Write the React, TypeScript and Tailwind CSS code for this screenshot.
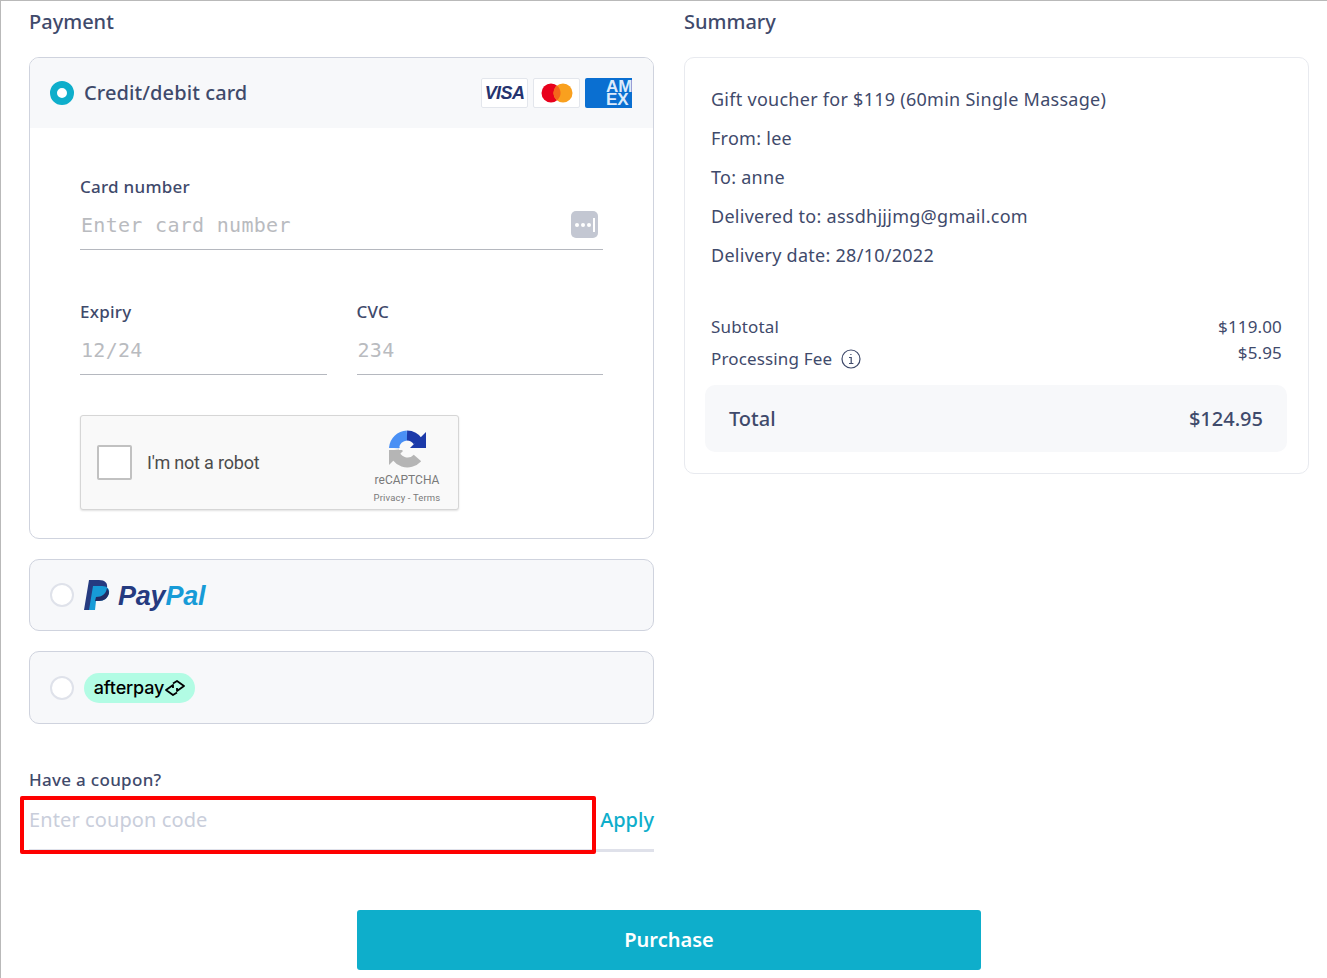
const font = "[font-family:'Noto_Sans',sans-serif]";

function Radio({ active }: { active?: boolean }) {
  return active ? (
    <span className="block w-6 h-6 rounded-full border-[7px] border-[#0eaecb] bg-white shrink-0" />
  ) : (
    <span className="block w-6 h-6 rounded-full border-2 border-[#dfe2ea] bg-white shrink-0" />
  );
}

function CardLogos() {
  return (
    <div className="flex gap-[5px] mt-[-1px]">
      <div className="w-[47px] h-[30px] bg-white border border-[#e3e6ec] rounded-[2px] flex items-center justify-center">
        <span className="text-[#25346f] text-[18px] font-bold italic leading-none tracking-[-0.6px] [font-family:'Liberation_Sans',sans-serif]">VISA</span>
      </div>
      <div className="w-[47px] h-[30px] bg-white border border-[#e3e6ec] rounded-[2px] flex items-center justify-center">
        <svg width="32" height="20" viewBox="0 0 32 20">
          <circle cx="10" cy="10" r="9.5" fill="#e8001c" />
          <circle cx="22" cy="10" r="9.5" fill="#f9a01e" />
          <path d="M16 2.6a9.5 9.5 0 0 1 0 14.8a9.5 9.5 0 0 1 0-14.8z" fill="#f4661b" />
        </svg>
      </div>
      <svg width="47" height="30" viewBox="0 0 47 30" className="block rounded-l-[2px]">
        <rect width="47" height="30" fill="#0a6fd1" />
        <text x="21" y="14" fill="#dcebfb" fontSize="17" fontWeight="700" fontFamily="'Liberation Sans', sans-serif">AM</text>
        <text x="21" y="27" fill="#dcebfb" fontSize="17" fontWeight="700" fontFamily="'Liberation Sans', sans-serif">EX</text>
      </svg>
    </div>
  );
}

function Field({ label, placeholder, icon, className }: { label: string; placeholder: string; icon?: boolean; className?: string }) {
  return (
    <div className={className}>
      <div className="text-[17px] leading-[22px] font-medium tracking-[0.25px] text-[#3f4a6b]">{label}</div>
      <div className="mt-[5px] h-[47px] border-b border-[#b5b8bf] flex items-center justify-between pb-[3px]">
        <span className="[font-family:'DejaVu_Sans_Mono',monospace] text-[#b9bbbf] text-[20px] leading-none tracking-[0.3px] pl-[1px]">{placeholder}</span>
        {icon && (
          <span className="w-[27px] h-[27px] mr-[5px] rounded-[5px] bg-[#c3c7d2] flex items-center justify-center gap-[2px]">
            <i className="block w-[4px] h-[4px] rounded-full bg-white" />
            <i className="block w-[4px] h-[4px] rounded-full bg-white" />
            <i className="block w-[4px] h-[4px] rounded-full bg-white" />
            <i className="block w-[2px] h-[14px] bg-white" />
          </span>
        )}
      </div>
    </div>
  );
}

function Recaptcha() {
  return (
    <div className="w-[379px] h-[95px] bg-[#f9f9f9] border border-[#d6d6d6] rounded-[3px] shadow-[0_1px_2px_rgba(0,0,0,0.12)] flex items-center pl-[16px] pr-[16px] [font-family:'Roboto',sans-serif]">
      <span className="block w-[35px] h-[35px] bg-white border-2 border-[#c1c1c1] rounded-[2px] shrink-0" />
      <span className="ml-[15px] text-[#4c4c4c] text-[18px] leading-none tracking-[-0.2px] flex-1">I'm not a robot</span>
      <div className="flex flex-col items-center w-[70px] mt-[6px]">
        <svg width="40" height="40" viewBox="0 0 40 40" fill="none">
          <path d="M7 19A13.5 13.5 0 0 1 20 6.5" stroke="#4a90f5" strokeWidth="10" />
          <path d="M2 19h11l-2-2 3-8-3-4z" fill="#4a90f5" />
          <path d="M20 6.5A13.5 13.5 0 0 1 31 12.5" stroke="#1c3aa9" strokeWidth="10" />
          <path d="M39 3v16H23z" fill="#1c3aa9" />
          <path d="M7 21A13.5 13.5 0 0 0 30.5 29" stroke="#b5b5b5" strokeWidth="10" />
          <path d="M2 21h15L2 36z" fill="#b5b5b5" />
          <path d="M14 20l6-6 3 2-4 4 5 4-3 3z" fill="#f9f9f9" />
        </svg>
        <span className="text-[#7a7a7a] text-[12px] leading-none mt-[5px]">reCAPTCHA</span>
        <span className="text-[#7a7a7a] text-[9.5px] leading-none mt-[7px] whitespace-nowrap tracking-[0.15px]">Privacy - Terms</span>
      </div>
    </div>
  );
}

function PayPalMark() {
  return (
    <svg width="26" height="30" viewBox="0 0 26 30">
      <path d="M5 0h10c6 0 9 3 8 8-1 6-5 9-11 9H8l-2 13H0z" fill="#253b80" />
      <path d="M9 6h9c5 0 8 3 7 7-1 5-5 8-10 8h-3l-1 9H5z" fill="#179bd7" />
      <path d="M8 17h4c6 0 10-3 11-9 1 1 2 3 2 5-1 5-5 8-10 8h-4l1-4z" fill="#222d65" />
    </svg>
  );
}

function AfterpayMark() {
  return (
    <svg width="20" height="16" viewBox="0 0 20 16" fill="none" stroke="#000" strokeWidth="1.8" strokeLinejoin="round" className="ml-[1px]">
      <path d="M8 3.5L12 1L19 6L12 11V8" />
      <path d="M12 12.5L8 15L1 10L8 5V8" />
    </svg>
  );
}

export default function App() {
  return (
    <div className={`${font} w-[1327px] h-[978px] overflow-hidden bg-white border-t border-l border-[#b9b9b9] pl-[28px] relative text-[#3f4a6b]`}>
      <div className="flex gap-[30px] items-start">
        <div className="w-[625px]">
          <h2 className="text-[20px] leading-[28px] pt-[7px] font-medium">Payment</h2>
          <div className="mt-[21px] border border-[#cfd3de] rounded-[10px] h-[482px] overflow-hidden">
            <div className="h-[70px] bg-[#f7f8fa] flex items-center pl-[20px] pr-[21px]">
              <Radio active />
              <span className="ml-[10px] text-[20px] font-medium flex-1 tracking-[0.1px]">Credit/debit card</span>
              <CardLogos />
            </div>
            <div className="pl-[50px] pr-[50px] pt-[48px]">
              <Field label="Card number" placeholder="Enter card number" icon />
              <div className="flex gap-[30px] mt-[51px]">
                <Field label="Expiry" placeholder="12/24" className="flex-1" />
                <Field label="CVC" placeholder="234" className="flex-1" />
              </div>
              <div className="mt-[40px]">
                <Recaptcha />
              </div>
            </div>
          </div>

          <div className="mt-[20px] h-[72px] bg-[#f7f8fa] border border-[#cfd3de] rounded-[10px] flex items-center pl-[20px]">
            <Radio />
            <span className="ml-[10px] flex items-center">
              <PayPalMark />
              <span className="ml-[8px] mt-[3px] text-[27px] font-bold italic leading-none tracking-[-0.2px] [font-family:'Liberation_Sans',sans-serif]">
                <span className="text-[#253b80]">Pay</span>
                <span className="text-[#179bd7]">Pal</span>
              </span>
            </span>
          </div>

          <div className="mt-[20px] h-[73px] bg-[#f7f8fa] border border-[#cfd3de] rounded-[10px] flex items-center pl-[20px]">
            <Radio />
            <span className="ml-[10px] h-[30px] w-[111px] rounded-full bg-[#b2fce4] flex items-center justify-center text-black text-[18px] font-medium [font-family:'Inter',sans-serif] tracking-[-0.15px]">
              afterpay
              <AfterpayMark />
            </span>
          </div>

          <div className="mt-[45px] text-[17px] leading-[22px] font-medium tracking-[0.3px]">Have a coupon?</div>
          <div className="mt-[8px] h-[53px] border-b-[3px] border-[#dfe1ea] flex justify-between pt-[6px] relative">
            <span className="text-[20px] leading-[30px] text-[#c9cedb] tracking-[0.1px]">Enter coupon code</span>
            <span className="text-[20px] leading-[30px] font-medium text-[#0eaecb]">Apply</span>
            <div className="absolute left-[-9px] top-[-3px] w-[576px] h-[58px] border-[4px] border-[#fe0000] rounded-[2px]" />
          </div>
        </div>

        <div className="w-[625px]">
          <h2 className="text-[20px] leading-[28px] pt-[7px] font-medium">Summary</h2>
          <div className="mt-[21px] h-[417px] border border-[#e8eaef] rounded-[10px] pl-[20px] pr-[21px] pt-[22px]">
            <div className="pl-[6px] text-[18px] leading-[39px] tracking-[0.27px]">
              <div>Gift voucher for $119 (60min Single Massage)</div>
              <div>From: lee</div>
              <div>To: anne</div>
              <div>Delivered to: assdhjjjmg@gmail.com</div>
              <div>Delivery date: 28/10/2022</div>
            </div>
            <div className="mt-[39px] pl-[6px] pr-[5px] text-[17px] tracking-[0.15px]">
              <div className="flex justify-between leading-[26px] h-[26px]">
                <span>Subtotal</span>
                <span>$119.00</span>
              </div>
              <div className="flex justify-between h-[45px] pt-[6px] leading-[26px]">
                <span className="flex items-center h-[26px]">
                  Processing Fee
                  <svg className="ml-[9px]" width="20" height="20" viewBox="0 0 20 20" fill="none" stroke="#3f4a6b" strokeWidth="1.2">
                    <circle cx="10" cy="10" r="9" />
                    <path d="M8 8.5h2.2v6M8 14.5h4.4M9.3 5.5h1.2" />
                  </svg>
                </span>
                <span className="mt-[-6px] h-[26px]">$5.95</span>
              </div>
            </div>
            <div className="h-[67px] bg-[#f7f8fa] rounded-[10px] flex items-center justify-between px-[24px] text-[20px] font-medium">
              <span>Total</span>
              <span>$124.95</span>
            </div>
          </div>
        </div>
      </div>

      <div className="w-[624px] ml-[328px] mt-[58px]">
        <button className="w-[624px] h-[60px] bg-[#0eaecb] rounded-[3px] text-white text-[20px] font-semibold">Purchase</button>
      </div>
    </div>
  );
}
